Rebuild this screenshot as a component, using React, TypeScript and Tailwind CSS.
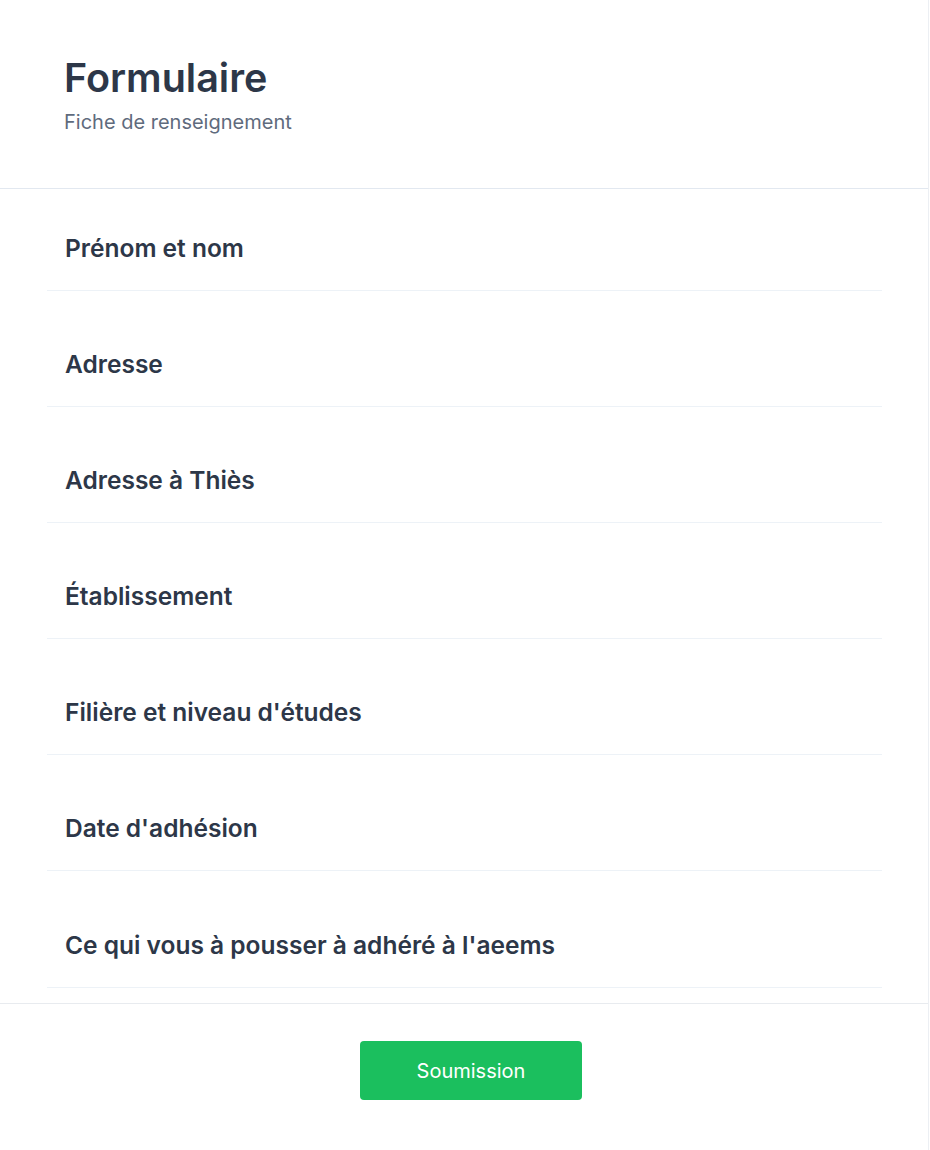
import React from "react";

const fields = [
  "Prénom et nom",
  "Adresse",
  "Adresse à Thiès",
  "Établissement",
  "Filière et niveau d'études",
  "Date d'adhésion",
  "Ce qui vous à pousser à adhéré à l'aeems",
];

export default function App() {
  return (
    <div className="min-h-[1150px] w-[929px] bg-white border-r border-[#eceff3] font-['Inter',sans-serif] text-[#2d3748]">
      {/* Header */}
      <div className="px-16 pt-[54px] pb-[52px] border-b border-[#e2e8f0]">
        <h1 className="text-[39.5px] leading-[48px] font-semibold">Formulaire</h1>
        <p className="mt-[6px] text-[20px] leading-[28px] text-[#5f6b7d]">
          Fiche de renseignement
        </p>
      </div>

      {/* Fields */}
      <div className="ml-[47px] mr-[46px] pb-[15px]">
        {fields.map((label, i) => (
          <div
            key={i}
            className={
              "px-[18px] pb-[27px] border-b border-[#edf2f7] " +
              (i === 0 ? "pt-[44px]" : i === fields.length - 1 ? "pt-[59px]" : "pt-[58px]")
            }
          >
            <label className="block text-[24.5px] leading-[30px] font-semibold">
              {label}
            </label>
          </div>
        ))}
      </div>

      {/* Footer */}
      <div className="border-t border-[#e8ebef] pt-[37px] pb-[50px] pl-[14px] flex justify-center">
        <button className="w-[222px] h-[59px] rounded bg-[#1bbf5e] text-white text-[20px]">
          Soumission
        </button>
      </div>
    </div>
  );
}
